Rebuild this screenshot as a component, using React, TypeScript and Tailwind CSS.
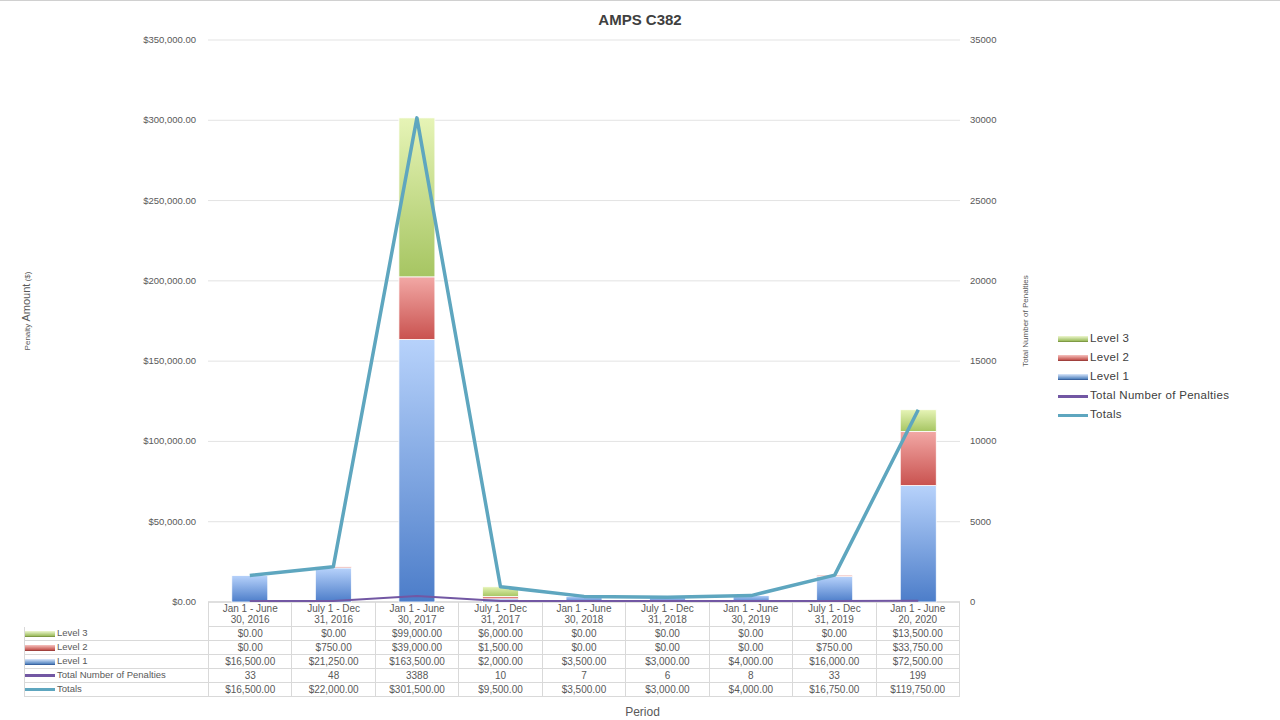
import React from "react";

const cols = ["Jan 1 - June|30, 2016","July 1 - Dec|31, 2016","Jan 1 - June|30, 2017","July 1 - Dec|31, 2017","Jan 1 - June|30, 2018","July 1 - Dec|31, 2018","Jan 1 - June|30, 2019","July 1 - Dec|31, 2019","Jan 1 - June|20, 2020"];
const l3 = [0,0,99000,6000,0,0,0,0,13500];
const l2 = [0,750,39000,1500,0,0,0,750,33750];
const l1 = [16500,21250,163500,2000,3500,3000,4000,16000,72500];
const tnp = [33,48,3388,10,7,6,8,33,199];
const tot = [16500,22000,301500,9500,3500,3000,4000,16750,119750];
const fmt = (v: number) => "$" + v.toLocaleString("en-US", { minimumFractionDigits: 2, maximumFractionDigits: 2 });

const X0 = 208, CW = 83.56, Y0 = 601, K = 562 / 350000;
const cx = (i: number) => X0 + CW * i + CW / 2;
const y = (v: number) => Y0 - v * K;

const rows: { label: string; kind: string; vals: string[] }[] = [
  { label: "Level 3", kind: "g", vals: l3.map(fmt) },
  { label: "Level 2", kind: "r", vals: l2.map(fmt) },
  { label: "Level 1", kind: "b", vals: l1.map(fmt) },
  { label: "Total Number of Penalties", kind: "p", vals: tnp.map(String) },
  { label: "Totals", kind: "t", vals: tot.map(fmt) },
];

function Swatch({ kind }: { kind: string }) {
  if (kind === "p") return <span className="inline-block w-[30px] h-[3px] bg-[#7257a3] mr-[2px]" />;
  if (kind === "t") return <span className="inline-block w-[30px] h-[3px] bg-[#5ea6bf] mr-[2px]" />;
  const c = kind === "g" ? "bg-gradient-to-b from-[#eef7cf] to-[#9bbb59] border-b border-[#7f9a45]" : kind === "r" ? "bg-gradient-to-b from-[#f6c2c0] to-[#c0504d] border-b border-[#a0403d]" : "bg-gradient-to-b from-[#dbe8fb] to-[#4f81bd] border-b border-[#3b64a0]";
  return <span className={`inline-block w-[30px] h-[6px] mr-[2px] ${c}`} />;
}

export default function App() {
  const grid = [0, 50000, 100000, 150000, 200000, 250000, 300000, 350000];
  const lab = (v: number) => v === 0 ? "$0.00" : "$" + (v).toLocaleString("en-US") + ".00";
  return (
    <div className="w-[1280px] h-[720px] bg-white border-t border-[#d0d0d0] relative overflow-hidden" style={{ fontFamily: "'Liberation Sans', Arial, sans-serif" }}>
      <div className="flex">
        <svg width="1040" height="606" className="block shrink-0 mb-[-5px]">
          <defs>
            <linearGradient id="gb" x1="0" y1="0" x2="0" y2="1"><stop offset="0" stopColor="#b7d2fb" /><stop offset="1" stopColor="#4c7dc9" /></linearGradient>
            <linearGradient id="gr" x1="0" y1="0" x2="0" y2="1"><stop offset="0" stopColor="#f2a8a5" /><stop offset="1" stopColor="#c9524f" /></linearGradient>
            <linearGradient id="gg" x1="0" y1="0" x2="0" y2="1"><stop offset="0" stopColor="#e6f4b6" /><stop offset="1" stopColor="#a6c562" /></linearGradient>
          </defs>
          <text x="640" y="24" textAnchor="middle" fontSize="15" fontWeight="bold" fill="#404040">AMPS C382</text>
          {grid.map((g) => (
            <g key={g}>
              <line x1={X0} x2={960} y1={y(g)} y2={y(g)} stroke={g === 0 ? "#bfbfbf" : "#e3e3e3"} strokeWidth="1" />
              <text x="196" y={y(g) + 3} textAnchor="end" fontSize="9.5" fill="#595959">{lab(g)}</text>
              <text x="970" y={y(g) + 3} fontSize="9.5" fill="#595959">{g === 0 ? "0" : String(g / 10)}</text>
            </g>
          ))}
          <text transform="translate(30 310) rotate(-90)" textAnchor="middle" fontSize="8" fill="#595959">Penalty <tspan fontSize="11">Amount</tspan> ($)</text>
          <text transform="translate(1028 320) rotate(-90)" textAnchor="middle" fontSize="8" fill="#595959">Total Number of Penalties</text>
          {cols.map((_, i) => {
            const x = cx(i) - 18;
            const a = l1[i], b = l2[i], c = l3[i];
            return (
              <g key={i}>
                {a > 0 && <rect x={x} y={y(a)} width="36" height={a * K} fill="url(#gb)" stroke="#fff" strokeWidth="0.8" />}
                {b > 0 && <rect x={x} y={y(a + b)} width="36" height={b * K} fill="url(#gr)" stroke="#fff" strokeWidth="0.8" />}
                {c > 0 && <rect x={x} y={y(a + b + c)} width="36" height={c * K} fill="url(#gg)" stroke="#fff" strokeWidth="0.8" />}
              </g>
            );
          })}
          <polyline points={tnp.map((v, i) => `${cx(i)},${Y0 - 1 - v * 0.0015}`).join(" ")} fill="none" stroke="#7257a3" strokeWidth="2" />
          <polyline points={tot.map((v, i) => `${cx(i)},${y(v)}`).join(" ")} fill="none" stroke="#5ea6bf" strokeWidth="3.5" strokeLinejoin="round" />
        </svg>
        <div className="flex flex-col gap-[5px] pt-[331px] pl-[18px] text-[11.5px] text-[#404040]">
          {rows.map((r) => (
            <div key={r.label} className="flex items-center h-[14px] whitespace-nowrap"><Swatch kind={r.kind} /><span className="tracking-[0.3px]">{r.label}</span></div>
          ))}
        </div>
      </div>
      <div className="ml-[24px] w-[936px] text-[10px] text-[#595959]">
        <div className="flex h-[25px]">
          <div className="w-[184px]" />
          {cols.map((c) => (
            <div key={c} className="flex-1 border-l border-b border-[#d9d9d9] flex flex-col items-center justify-center leading-[11px]">
              {c.split("|").map((s) => <span key={s}>{s}</span>)}
            </div>
          ))}
          <div className="w-0 border-r border-[#d9d9d9]" />
        </div>
        {rows.map((r) => (
          <div key={r.label} className="flex h-[14px] border-b border-[#d9d9d9]">
            <div className="w-[184px] border-l border-[#d9d9d9] flex items-center whitespace-nowrap"><Swatch kind={r.kind} /><span className="text-[9.5px]">{r.label}</span></div>
            {r.vals.map((v, i) => (
              <div key={i} className="flex-1 border-l border-[#d9d9d9] flex items-center justify-center">{v}</div>
            ))}
            <div className="w-0 border-r border-[#d9d9d9]" />
          </div>
        ))}
      </div>
      <div className="text-center text-[12px] text-[#595959] mt-[6px] pl-[5px]">Period</div>
    </div>
  );
}
